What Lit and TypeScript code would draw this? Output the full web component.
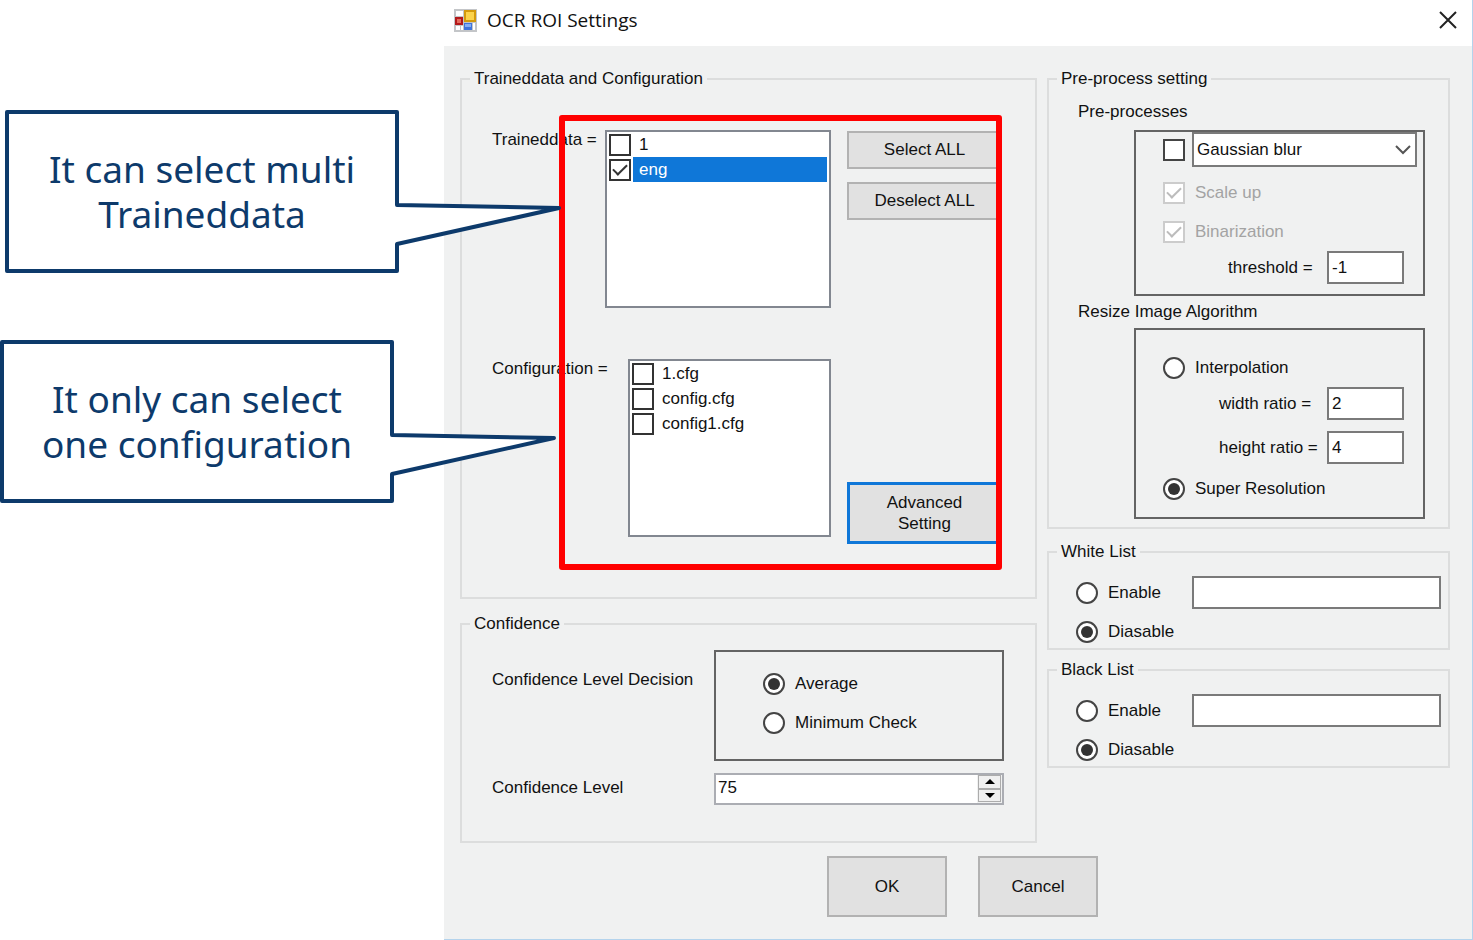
import { LitElement, html, css, svg } from "lit";
import { customElement, property, state } from "lit/decorators.js";

/** Speech-bubble note whose tail points at a part of the dialog. */
@customElement("note-callout")
export class NoteCallout extends LitElement {
  static styles = css`
    :host {
      display: block;
      position: relative;
      width: 394px;
      height: 163px;
    }
    .shape {
      position: absolute;
      left: 0;
      top: 0;
      overflow: visible;
      pointer-events: none;
    }
    .text {
      position: relative;
      box-sizing: border-box;
      height: 100%;
      margin: 0;
      padding-bottom: 2px;
      display: flex;
      flex-direction: column;
      justify-content: center;
      text-align: center;
      white-space: nowrap;
      font: 37px/45px "Noto Sans", sans-serif;
      color: #0d3a6b;
    }
  `;

  render() {
    return html`
      <svg class="shape" width="560" height="163" viewBox="0 0 560 163" aria-hidden="true">
        ${svg`<path d="M2 2H392V95L554 98L392 134V161H2Z" fill="#fff" stroke="#0d3a6b" stroke-width="4" stroke-linejoin="round" />`}
      </svg>
      <p class="text"><slot></slot></p>
    `;
  }
}

interface ListEntry {
  name: string;
  checked: boolean;
}

/** Box with a list of tickable file names. */
@customElement("check-list")
export class CheckList extends LitElement {
  @property({ type: Array }) entries: ListEntry[] = [];
  @property({ type: Number }) current = -1;

  static styles = css`
    :host {
      display: block;
      box-sizing: border-box;
      height: 178px;
      padding: 0 2px;
      background: #fff;
      border: 2px solid #828790;
      overflow: hidden;
    }
    .entry {
      display: flex;
      align-items: center;
      height: 25px;
      gap: 2px;
    }
    .box {
      appearance: none;
      box-sizing: border-box;
      flex: none;
      width: 22px;
      height: 22px;
      margin: 0;
      border: 2px solid #333;
      background: #fff;
      display: grid;
      place-items: center;
    }
    .box:checked::before {
      content: "";
      width: 6px;
      height: 12px;
      margin-bottom: 4px;
      border: solid #333;
      border-width: 0 2px 2px 0;
      transform: rotate(45deg);
    }
    .name {
      flex: 1;
      padding-left: 6px;
      line-height: 25px;
    }
    .current {
      background: #0f77d8;
      color: #fff;
    }
  `;

  render() {
    return this.entries.map(
      (entry, i) => html`
        <div class="entry">
          <input class="box" type="checkbox" id="entry-${i}" .checked=${entry.checked} />
          <label class="name ${i === this.current ? "current" : ""}" for="entry-${i}">${entry.name}</label>
        </div>
      `
    );
  }
}

@customElement("app-root")
export class AppRoot extends LitElement {
  @state() private level = 75;

  private trained: ListEntry[] = [
    { name: "1", checked: false },
    { name: "eng", checked: true },
  ];

  private configs: ListEntry[] = [
    { name: "1.cfg", checked: false },
    { name: "config.cfg", checked: false },
    { name: "config1.cfg", checked: false },
  ];

  static styles = css`
    :host {
      display: grid;
      grid-template-columns: 444px minmax(0, 1fr);
      min-height: 100vh;
      background: #fff;
      color: #111;
      font: 17px/20px "Liberation Sans", Arial, sans-serif;
    }
    .notes {
      z-index: 1;
      display: flex;
      flex-direction: column;
      gap: 67px;
      padding-top: 110px;
    }
    .first {
      margin-left: 5px;
    }
    .dialog {
      display: flex;
      flex-direction: column;
      background: #f0f1f1;
      border: solid #b4d3ec;
      border-width: 0 1px 1px 0;
    }
    .titlebar {
      display: flex;
      align-items: center;
      gap: 10px;
      height: 46px;
      box-sizing: border-box;
      padding: 0 14px 6px 10px;
      background: #fff;
    }
    .title {
      flex: 1;
      margin: 0;
      font: 19px/24px "Open Sans", sans-serif;
    }
    .close {
      padding: 0;
      border: 0;
      background: none;
      display: flex;
    }
    .body {
      padding: 23px 22px 22px 16px;
    }
    .columns {
      display: grid;
      grid-template-columns: 577fr 403fr;
      gap: 10px;
    }
    .group {
      min-width: 0;
      margin: 0;
      border: 2px solid #dcdddd;
      padding: 0;
    }
    .legend {
      margin-left: 8px;
      padding: 0 4px;
      line-height: 20px;
    }
    .data {
      padding: 41px 33px 53px 30px;
    }
    .marked {
      position: relative;
      display: flex;
      flex-direction: column;
      gap: 51px;
    }
    .highlight {
      position: absolute;
      inset: -15px 0 -26px 67px;
      border: 6px solid #f00;
      border-radius: 3px;
      pointer-events: none;
    }
    .pick {
      display: grid;
      grid-template-columns: minmax(0, 1fr) 155px;
      gap: 16px;
    }
    .listing {
      display: flex;
      justify-content: space-between;
      white-space: nowrap;
    }
    .trained {
      width: 226px;
    }
    .configs {
      width: 203px;
    }
    .side {
      display: flex;
      flex-direction: column;
      gap: 13px;
      padding-top: 1px;
    }
    .low {
      padding-top: 123px;
    }
    .button {
      box-sizing: border-box;
      height: 38px;
      padding: 0;
      background: #e1e1e1;
      border: 2px solid #b2b2b2;
      border-radius: 0;
      color: inherit;
      font: inherit;
    }
    .focus {
      height: 62px;
      border: 3px solid #0f77d8;
      line-height: 21px;
    }
    .big {
      width: 120px;
      height: 61px;
    }
    .confidence {
      margin-top: 15px;
    }
    .settings {
      display: grid;
      grid-template-columns: 222px minmax(0, 1fr);
      row-gap: 12px;
      padding: 16px 31px 36px 30px;
    }
    .caption {
      padding-top: 20px;
    }
    .tight {
      padding-top: 5px;
    }
    .frame {
      box-sizing: border-box;
      border: 2px solid #646464;
      display: flex;
      flex-direction: column;
    }
    .decision {
      gap: 17px;
      padding: 21px 0 25px 47px;
    }
    .choice {
      display: flex;
      align-items: center;
      gap: 10px;
      height: 22px;
    }
    .radio,
    .check {
      appearance: none;
      box-sizing: border-box;
      flex: none;
      width: 22px;
      height: 22px;
      margin: 0;
      border: 2px solid #444;
      background: #fff;
      display: grid;
      place-items: center;
    }
    .radio {
      border-radius: 50%;
    }
    .radio:checked::before {
      content: "";
      width: 12px;
      height: 12px;
      border-radius: 50%;
      background: #333;
    }
    .check:checked::before {
      content: "";
      width: 6px;
      height: 12px;
      margin-bottom: 4px;
      border: solid #bcbcbc;
      border-width: 0 2px 2px 0;
      transform: rotate(45deg);
    }
    .check:disabled {
      border-color: #ccc;
    }
    .disabled {
      color: #a3a3a3;
    }
    .field {
      box-sizing: border-box;
      min-width: 0;
      height: 33px;
      padding: 0 3px;
      border: 2px solid #7a7a7a;
      border-radius: 0;
      background: #fff;
      color: inherit;
      font: inherit;
    }
    .short {
      width: 77px;
    }
    .spinner {
      display: flex;
      height: 32px;
      box-sizing: border-box;
      border: 2px solid #abadb3;
      background: #fff;
    }
    .number {
      flex: 1;
      min-width: 0;
      padding: 0 2px 2px;
      border: 0;
      background: none;
      color: inherit;
      font: inherit;
      appearance: textfield;
    }
    .number::-webkit-inner-spin-button {
      display: none;
    }
    .steps {
      display: flex;
      flex-direction: column;
      width: 23px;
      padding: 0 1px 1px;
      background: #f0f1f1;
    }
    .step {
      flex: 1;
      display: grid;
      place-items: center;
      padding: 0;
      background: #f0f0f0;
      border: 1px solid #acacac;
    }
    .pre {
      padding: 13px 23px 8px 29px;
      display: flex;
      flex-direction: column;
    }
    .filters {
      margin: 8px 0 6px 56px;
      padding: 0 6px 10px 27px;
    }
    .combo {
      position: relative;
      flex: 1;
      margin-left: -3px;
    }
    .blur {
      height: 35px;
    }
    .select {
      appearance: none;
      width: 100%;
      height: 35px;
    }
    .chevron {
      position: absolute;
      right: 6px;
      top: 13px;
      pointer-events: none;
    }
    .scale {
      margin-top: 15px;
    }
    .binary {
      margin: 17px 0 8px;
    }
    .value {
      display: flex;
      align-items: center;
      justify-content: flex-end;
      padding-right: 13px;
    }
    .wide {
      width: 108px;
    }
    .narrow {
      width: 99px;
    }
    .resize {
      margin: 6px 0 0 56px;
      padding: 27px 6px 17px 27px;
    }
    .ratios {
      display: flex;
      flex-direction: column;
      gap: 11px;
      margin: 8px 0 14px;
    }
    .list {
      padding: 14px 7px 5px 27px;
      display: flex;
      flex-direction: column;
      gap: 12px;
    }
    .white {
      margin-top: 13px;
    }
    .black {
      margin-top: 10px;
    }
    .line {
      display: grid;
      grid-template-columns: 116px minmax(0, 1fr);
      align-items: center;
    }
    .actions {
      display: flex;
      justify-content: center;
      gap: 31px;
      margin-top: 13px;
      padding-left: 15px;
    }
  `;

  private radio(group: string, id: string, text: string, checked = false) {
    return html`
      <div class="choice">
        <input class="radio" type="radio" name=${group} id=${id} ?checked=${checked} />
        <label for=${id}>${text}</label>
      </div>
    `;
  }

  private listGroup(title: string, key: string) {
    return html`
      <fieldset class="group ${key}">
        <legend class="legend">${title}</legend>
        <div class="list">
          <div class="line">
            ${this.radio(key, `${key}-on`, "Enable")}
            <input class="field" type="text" aria-label="${title} characters" />
          </div>
          ${this.radio(key, `${key}-off`, "Diasable", true)}
        </div>
      </fieldset>
    `;
  }

  private step(delta: number) {
    this.level = Math.min(100, Math.max(0, this.level + delta));
  }

  render() {
    return html`
      <aside class="notes">
        <note-callout class="first">It can select multi<br />Traineddata</note-callout>
        <note-callout>It only can select<br />one configuration</note-callout>
      </aside>

      <main class="dialog">
        <header class="titlebar">
          <svg width="23" height="23" viewBox="0 0 23 23" aria-hidden="true">
            <rect width="23" height="23" fill="#c3c5c8" />
            <path d="M2 2h7v5H2zM2 17h4v4H2zM7 17h2v4H7zM19 14h2v7h-2z" fill="#fff" />
            <rect x="10" y="1" width="12" height="12" fill="#d49a0c" />
            <rect x="12" y="3" width="8" height="8" fill="#fbd34c" />
            <rect x="1" y="8" width="8" height="8" fill="#b3191b" />
            <rect x="3" y="10" width="4" height="4" fill="#e56a5c" />
            <rect x="10" y="14" width="8" height="7" fill="#3f74dc" />
            <rect x="11" y="15" width="6" height="3" fill="#85aef5" />
          </svg>
          <h1 class="title">OCR ROI Settings</h1>
          <button class="close" type="button" aria-label="Close">
            <svg width="20" height="20" viewBox="0 0 20 20" aria-hidden="true">
              <path d="M2 2L18 18M18 2L2 18" stroke="#222" stroke-width="2" />
            </svg>
          </button>
        </header>

        <form class="body" @submit=${(e: Event) => e.preventDefault()}>
          <div class="columns">
            <div>
              <fieldset class="group">
                <legend class="legend">Traineddata and Configuration</legend>
                <div class="data">
                  <div class="marked">
                    <div class="pick">
                      <div class="listing">
                        <span>Traineddata =</span>
                        <check-list class="trained" .entries=${this.trained} .current=${1}></check-list>
                      </div>
                      <div class="side">
                        <button class="button" type="button">Select ALL</button>
                        <button class="button" type="button">Deselect ALL</button>
                      </div>
                    </div>
                    <div class="pick">
                      <div class="listing">
                        <span>Configuration =</span>
                        <check-list class="configs" .entries=${this.configs}></check-list>
                      </div>
                      <div class="side low">
                        <button class="button focus" type="button">Advanced<br />Setting</button>
                      </div>
                    </div>
                    <div class="highlight"></div>
                  </div>
                </div>
              </fieldset>

              <fieldset class="group confidence">
                <legend class="legend">Confidence</legend>
                <div class="settings">
                  <span class="caption">Confidence Level Decision</span>
                  <div class="frame decision">
                    ${this.radio("decision", "average", "Average", true)}
                    ${this.radio("decision", "minimum", "Minimum Check")}
                  </div>
                  <label class="tight" for="level">Confidence Level</label>
                  <div class="spinner">
                    <input class="number" type="number" id="level" .value=${String(this.level)} />
                    <div class="steps">
                      <button class="step" type="button" aria-label="Increase" @click=${() => this.step(1)}>
                        <svg width="10" height="5" viewBox="0 0 10 5"><path d="M0 5L5 0L10 5Z" /></svg>
                      </button>
                      <button class="step" type="button" aria-label="Decrease" @click=${() => this.step(-1)}>
                        <svg width="10" height="5" viewBox="0 0 10 5"><path d="M0 0L5 5L10 0Z" /></svg>
                      </button>
                    </div>
                  </div>
                </div>
              </fieldset>
            </div>

            <div>
              <fieldset class="group">
                <legend class="legend">Pre-process setting</legend>
                <div class="pre">
                  <span>Pre-processes</span>
                  <div class="frame filters">
                    <div class="choice blur">
                      <input class="check" type="checkbox" id="blur" aria-label="Apply blur" />
                      <div class="combo">
                        <select class="field select" aria-label="Blur type">
                          <option>Gaussian blur</option>
                        </select>
                        <svg class="chevron" width="16" height="10" viewBox="0 0 16 10" aria-hidden="true">
                          <path d="M1 1L8 8L15 1" fill="none" stroke="#555" stroke-width="2" />
                        </svg>
                      </div>
                    </div>
                    <div class="choice scale">
                      <input class="check" type="checkbox" id="scale" checked disabled />
                      <label class="disabled" for="scale">Scale up</label>
                    </div>
                    <div class="choice binary">
                      <input class="check" type="checkbox" id="binary" checked disabled />
                      <label class="disabled" for="binary">Binarization</label>
                    </div>
                    <div class="value">
                      <label class="narrow" for="threshold">threshold =</label>
                      <input class="field short" type="text" id="threshold" value="-1" />
                    </div>
                  </div>
                  <span>Resize Image Algorithm</span>
                  <div class="frame resize">
                    ${this.radio("resize", "interpolation", "Interpolation")}
                    <div class="ratios">
                      <div class="value">
                        <label class="wide" for="width-ratio">width ratio =</label>
                        <input class="field short" type="text" id="width-ratio" value="2" />
                      </div>
                      <div class="value">
                        <label class="wide" for="height-ratio">height ratio =</label>
                        <input class="field short" type="text" id="height-ratio" value="4" />
                      </div>
                    </div>
                    ${this.radio("resize", "super", "Super Resolution", true)}
                  </div>
                </div>
              </fieldset>
              ${this.listGroup("White List", "white")} ${this.listGroup("Black List", "black")}
            </div>
          </div>

          <div class="actions">
            <button class="button big" type="submit">OK</button>
            <button class="button big" type="button">Cancel</button>
          </div>
        </form>
      </main>
    `;
  }
}
